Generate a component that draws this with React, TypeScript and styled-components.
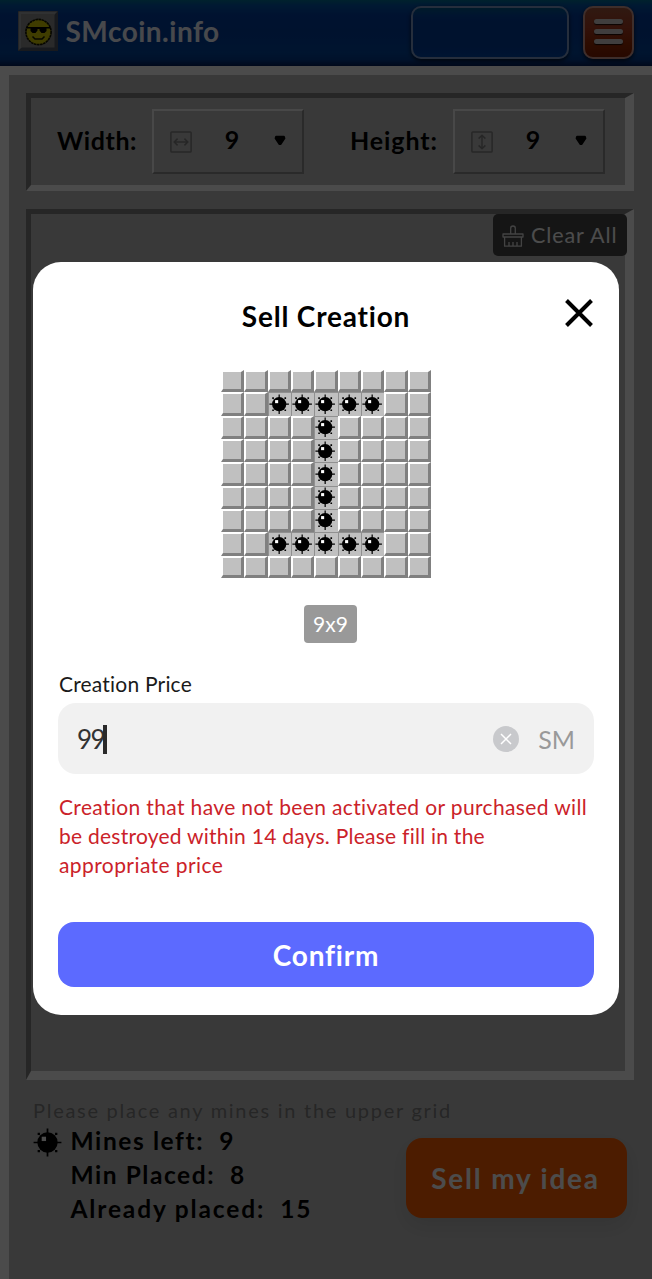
import React from "react";
import styled, { createGlobalStyle } from "styled-components";

const GlobalStyle = createGlobalStyle`
  * { box-sizing: border-box; }
  body { margin: 0; background: #c0c0c0; font-family: Lato, "Liberation Sans", sans-serif; }
  button { font-family: inherit; border: 0; cursor: pointer; }
`;

const Screen = styled.div`
  height: 1279px;
  overflow: hidden;
  display: flex;
  flex-direction: column;
`;

const Header = styled.header`
  flex: none;
  height: 66px;
  padding: 6px 18px 7px 18px;
  display: flex;
  align-items: flex-start;
  background: linear-gradient(180deg, #007096 0%, #0055a8 8%, #003ca0 24%, #003c9c 45%, #00469e 80%, #003c90 90%, #001e5a 100%);
`;

const Logo = styled.div`
  width: 40px;
  height: 40px;
  margin-top: 5px;
  flex: none;
`;

const SiteName = styled.div`
  margin-left: 7.5px;
  margin-top: 5px;
  flex: 1;
  font-size: 28px;
  line-height: 40px;
  font-weight: 700;
  letter-spacing: 0.5px;
  color: #f0f4ff;
`;

const AccountBox = styled.div`
  width: 158px;
  height: 53px;
  border: 2px solid #7f9cc8;
  border-radius: 10px;
  background: linear-gradient(180deg, #005a8c 0%, #0046a0 14%, #003c9c 28%, #003c9c 80%, #0046a8 100%);
  box-shadow: 0 2px 4px rgba(0, 0, 0, 0.7);
`;

const MenuButton = styled.button`
  width: 51px;
  height: 53px;
  margin-left: 14px;
  padding: 0 0 2px;
  border: 2px solid #d09a90;
  border-radius: 10px;
  display: flex;
  flex-direction: column;
  align-items: center;
  justify-content: center;
  gap: 5px;
  background: linear-gradient(180deg, #a0553c 0%, #aa3c22 40%, #962800 75%, #821e00 100%);
  box-shadow: 0 2px 4px rgba(0, 0, 0, 0.7);
`;

const MenuBar = styled.span`
  width: 29px;
  height: 5px;
  border-radius: 3px;
  background: #d8d0d0;
  box-shadow: 0 1px 1px rgba(0, 0, 0, 0.8);
`;

const Board = styled.main`
  flex: 1;
  display: flex;
  flex-direction: column;
  border-top: 9px solid #fafafa;
  border-left: 9px solid #fafafa;
  padding: 18px 18px 0 17px;
  background: #c0c0c0;
`;

const Panel = styled.section<{ $bottom: number }>`
  border-style: solid;
  border-width: 5px 9px ${(p) => p.$bottom}px 5px;
  border-color: #808080 #fafafa #fafafa #808080;
`;

const SizePanel = styled(Panel)`
  height: 98px;
  flex: none;
  display: flex;
  align-items: flex-start;
  padding: 11px 20px 0 26px;
`;

const SizeLabel = styled.label<{ $width: number; $spacing: number }>`
  width: ${(p) => p.$width}px;
  font-size: 25px;
  font-weight: 700;
  line-height: 63px;
  letter-spacing: ${(p) => p.$spacing}px;
  color: #000;
`;

const SizeSelect = styled.div`
  width: 152px;
  height: 65px;
  padding: 0 16px 0 16px;
  display: flex;
  align-items: center;
  border: 2px solid;
  border-color: #f0f0f0 #8c8c8c #8c8c8c #f0f0f0;
  & + label { margin-left: 46px; }
`;

const SizeValue = styled.span`
  flex: 1;
  padding-right: 2px;
  text-align: center;
  font-size: 25px;
  font-weight: 700;
  line-height: 57px;
  padding-bottom: 4px;
`;

const GridPanel = styled(Panel)`
  height: 871px;
  margin-top: 18px;
  flex: none;
  display: flex;
  justify-content: flex-end;
  align-items: flex-start;
`;

const ClearButton = styled.button`
  width: 134px;
  height: 42px;
  margin-right: -2px;
  padding: 0 0 0 9px;
  flex: none;
  display: flex;
  align-items: center;
  gap: 7px;
  border-radius: 5px;
  background: #464646;
  color: #fff;
  font-size: 21.5px;
  letter-spacing: 0.9px;
  white-space: nowrap;
  z-index: 0;
`;

const Footer = styled.footer`
  display: flex;
  justify-content: space-between;
  padding: 18px 7px 0 7px;
`;

const Hint = styled.div`
  font-size: 20px;
  line-height: 25px;
  letter-spacing: 1.73px;
  white-space: nowrap;
  color: #808080;
`;

const Stats = styled.div`
  width: 374px;
`;

const StatRow = styled.div<{ $spacing: number }>`
  display: flex;
  align-items: center;
  height: 34.3px;
  font-size: 24.5px;
  font-weight: 700;
  letter-spacing: ${(p) => p.$spacing}px;
  white-space: nowrap;
`;

const StatIcon = styled.div`
  width: 37.5px;
  height: 24px;
  flex: none;
`;

const StatValue = styled.span`
  margin-left: 15px;
`;

const SellButton = styled.button`
  width: 221px;
  height: 80px;
  margin-top: 40px;
  margin-left: -1px;
  flex: none;
  border-radius: 16px;
  background: #ff5f00;
  color: #fff;
  font-size: 28px;
  font-weight: 700;
  letter-spacing: 1.8px;
  padding: 0 2px 1px 0;
  box-shadow: 0 8px 20px rgba(0, 0, 0, 0.1);
`;

const Overlay = styled.div`
  position: fixed;
  inset: 0;
  z-index: 10;
  padding: 261.5px 32.6px 0 32.6px;
  background: rgba(0, 0, 0, 0.7);
`;

const Dialog = styled.div`
  height: 753px;
  padding: 31px 25.4px 0 25.4px;
  display: flex;
  flex-direction: column;
  align-items: center;
  border-radius: 28px;
  background: #fff;
`;

const DialogHead = styled.div`
  align-self: stretch;
  height: 46px;
  display: grid;
  grid-template-columns: 30px 1fr 30px;
  align-items: center;
`;

const DialogTitle = styled.h2`
  grid-column: 2;
  margin: 0;
  text-align: center;
  font-size: 28px;
  font-weight: 700;
  letter-spacing: 0.8px;
  color: #000;
`;

const CloseButton = styled.button`
  width: 30px;
  height: 30px;
  padding: 0;
  margin-top: -5px;
  background: none;
`;

const MineGrid = styled.div`
  width: 210px;
  height: 208px;
  margin-top: 31.5px;
  display: grid;
  grid-template: repeat(9, 1fr) / repeat(9, 1fr);
`;

const Tile = styled.div`
  background: #c0c0c0;
  border-style: solid;
  border-width: 2px 3px 3px 2px;
  border-color: #fff #808080 #808080 #fff;
`;

const MineCell = styled.div`
  padding: 0.5px 2px 1.5px 0;
  background: #c0c0c0;
  border-top: 1px solid #909090;
  border-left: 1px solid #909090;
`;

const SizeTag = styled.div`
  width: 53px;
  height: 38px;
  margin-top: 27.4px;
  margin-left: 9px;
  border-radius: 4px;
  background: #999;
  color: #fff;
  font-size: 21px;
  line-height: 37px;
  text-align: center;
`;

const FieldLabel = styled.label`
  align-self: stretch;
  margin-top: 27.6px;
  padding-left: 1px;
  font-size: 21px;
  line-height: 26px;
  letter-spacing: 0.2px;
  color: #1a1a1a;
`;

const PriceField = styled.div`
  align-self: stretch;
  height: 70.5px;
  margin-top: 6.5px;
  padding: 1px 19px 0;
  display: flex;
  align-items: center;
  border-radius: 18px;
  background: #f1f1f1;
`;

const PriceValue = styled.span`
  font-size: 26px;
  letter-spacing: -1.5px;
  color: #333;
`;

const Caret = styled.span`
  width: 3.5px;
  height: 29px;
  margin-left: -1px;
  background: #2a2a2a;
`;

const ClearIcon = styled.svg`
  margin-left: auto;
`;

const Unit = styled.span`
  margin-left: 19px;
  font-size: 25px;
  color: #999;
`;

const Warning = styled.p`
  align-self: stretch;
  margin: 18.5px 0 0;
  padding-left: 1px;
  font-size: 21px;
  line-height: 29px;
  white-space: nowrap;
  color: #cb2229;
`;

const WarningLine = styled.span<{ $spacing: number }>`
  display: block;
  letter-spacing: ${(p) => p.$spacing}px;
`;

const ConfirmButton = styled.button`
  align-self: stretch;
  height: 65px;
  margin-top: 43px;
  flex: none;
  border-radius: 16px;
  background: #5c6aff;
  color: #fff;
  font-size: 28px;
  font-weight: 700;
  letter-spacing: 0.8px;
`;

const MineIcon = ({ size }: { size: number | string }) => (
  <svg width={size} height={size} viewBox="0 0 20 20" style={{ display: "block" }}>
    <path d="M10 0.4V19.6M0.4 10H19.6" stroke="#000" strokeWidth="1.2" />
    <path d="M3.2 3.2h1.6v1.6H3.2zM15.2 3.2h1.6v1.6h-1.6zM3.2 15.2h1.6v1.6H3.2zM15.2 15.2h1.6v1.6h-1.6z" fill="#000" />
    <circle cx="10" cy="10" r="7" fill="#000" />
    <rect x="6" y="6" width="3" height="3" fill="#fff" />
  </svg>
);

const SmileyLogo = () => (
  <svg width="40" height="40" viewBox="0 0 40 40">
    <rect width="40" height="40" fill="#505864" />
    <path d="M0.5 39.5V0.5H39.5L36 4H4V36z" fill="#a0a4a8" />
    <rect x="3" y="3" width="33.5" height="33.5" fill="#8c8c8c" />
    <circle cx="20.5" cy="21" r="12.6" fill="#d2c800" stroke="#141400" strokeWidth="1.6" strokeDasharray="2.6 0.5" />
    <path d="M8.5 16H32.5V17.5H28.5V20L26.5 22H23.5L21.5 19.5V18H19.5V19.5L17.5 22H14.5L12.5 20V17.5H8.5z" fill="#000" />
    <path d="M14.5 25.5L17 28H24L26.5 25.5" fill="none" stroke="#141400" strokeWidth="1.5" />
  </svg>
);

const SpanIcon = ({ vertical }: { vertical?: boolean }) => (
  <svg width="22" height="22" viewBox="0 0 22 22" fill="none" stroke="#808080" strokeWidth="1.5">
    <rect x="0.9" y="0.9" width="20.2" height="20.2" rx="0.8" />
    <path
      transform={vertical ? "rotate(90 11 11)" : undefined}
      d="M4.2 11H17.8M7.6 7.6L4.2 11L7.6 14.4M14.4 7.6L17.8 11L14.4 14.4"
    />
  </svg>
);

const DownArrow = () => (
  <svg width="12" height="11" viewBox="0 0 12 11" style={{ marginTop: -3 }}>
    <path d="M2 1.6H10L10.6 3.2L6.6 9.2H5.4L1.4 3.2z" fill="#000" stroke="#000" strokeWidth="1.6" strokeLinejoin="round" />
  </svg>
);

const BroomIcon = () => (
  <svg width="22" height="22" viewBox="0 0 22 22" fill="none" stroke="#e0e0e0" strokeWidth="1.3" strokeLinejoin="round" style={{ marginTop: 2 }}>
    <path d="M8.7 9V3.2Q8.7 1 11 1T13.3 3.2V9M1 9H21V12H1zM2.6 12V21.2H19.4V12M7 21V17M11 21V17M15 21V17" />
  </svg>
);

const MINED = new Set(["1-2", "1-3", "1-4", "1-5", "1-6", "2-4", "3-4", "4-4", "5-4", "6-4", "7-2", "7-3", "7-4", "7-5", "7-6"]);
const CELLS = Array.from({ length: 81 }, (_, i) => `${Math.floor(i / 9)}-${i % 9}`);

const STATS: [string, number, number][] = [
  ["Mines left:", 9, 1.6],
  ["Min Placed:", 8, 1.55],
  ["Already placed:", 15, 1.85],
];

export default function App() {
  return (
    <>
      <GlobalStyle />
      <Screen>
        <Header>
          <Logo><SmileyLogo /></Logo>
          <SiteName>SMcoin.info</SiteName>
          <AccountBox />
          <MenuButton aria-label="Menu">
            <MenuBar />
            <MenuBar />
            <MenuBar />
          </MenuButton>
        </Header>
        <Board>
          <SizePanel $bottom={6}>
            <SizeLabel $width={95} $spacing={0.6}>Width:</SizeLabel>
            <SizeSelect>
              <SpanIcon />
              <SizeValue>9</SizeValue>
              <DownArrow />
            </SizeSelect>
            <SizeLabel $width={103} $spacing={0.9}>Height:</SizeLabel>
            <SizeSelect>
              <SpanIcon vertical />
              <SizeValue>9</SizeValue>
              <DownArrow />
            </SizeSelect>
          </SizePanel>
          <GridPanel $bottom={9}>
            <ClearButton>
              <BroomIcon />
              Clear All
            </ClearButton>
          </GridPanel>
          <Footer>
            <Stats>
              <Hint>Please place any mines in the upper grid</Hint>
              {STATS.map(([label, value, spacing], i) => (
                <StatRow key={label} $spacing={spacing}>
                  <StatIcon>{i === 0 && <MineIcon size={29} />}</StatIcon>
                  {label}
                  <StatValue>{value}</StatValue>
                </StatRow>
              ))}
            </Stats>
            <SellButton>Sell my idea</SellButton>
          </Footer>
        </Board>
      </Screen>
      <Overlay>
        <Dialog role="dialog">
          <DialogHead>
            <DialogTitle>Sell Creation</DialogTitle>
            <CloseButton aria-label="Close">
              <svg width="30" height="30" viewBox="0 0 30 30" stroke="#000" strokeWidth="4">
                <path d="M2.5 2.5L27.5 27.5M27.5 2.5L2.5 27.5" />
              </svg>
            </CloseButton>
          </DialogHead>
          <MineGrid>
            {CELLS.map((id) =>
              MINED.has(id) ? (
                <MineCell key={id}><MineIcon size="100%" /></MineCell>
              ) : (
                <Tile key={id} />
              )
            )}
          </MineGrid>
          <SizeTag>9x9</SizeTag>
          <FieldLabel>Creation Price</FieldLabel>
          <PriceField>
            <PriceValue>99</PriceValue>
            <Caret />
            <ClearIcon width="26" height="26" viewBox="0 0 26 26">
              <circle cx="13" cy="13" r="13" fill="#c8c9cc" />
              <path d="M8 8L18 18M18 8L8 18" stroke="#fff" strokeWidth="1.5" />
            </ClearIcon>
            <Unit>SM</Unit>
          </PriceField>
          <Warning>
            <WarningLine $spacing={0.36}>Creation that have not been activated or purchased will</WarningLine>
            <WarningLine $spacing={0.25}>be destroyed within 14 days. Please fill in the</WarningLine>
            <WarningLine $spacing={0.42}>appropriate price</WarningLine>
          </Warning>
          <ConfirmButton>Confirm</ConfirmButton>
        </Dialog>
      </Overlay>
    </>
  );
}
